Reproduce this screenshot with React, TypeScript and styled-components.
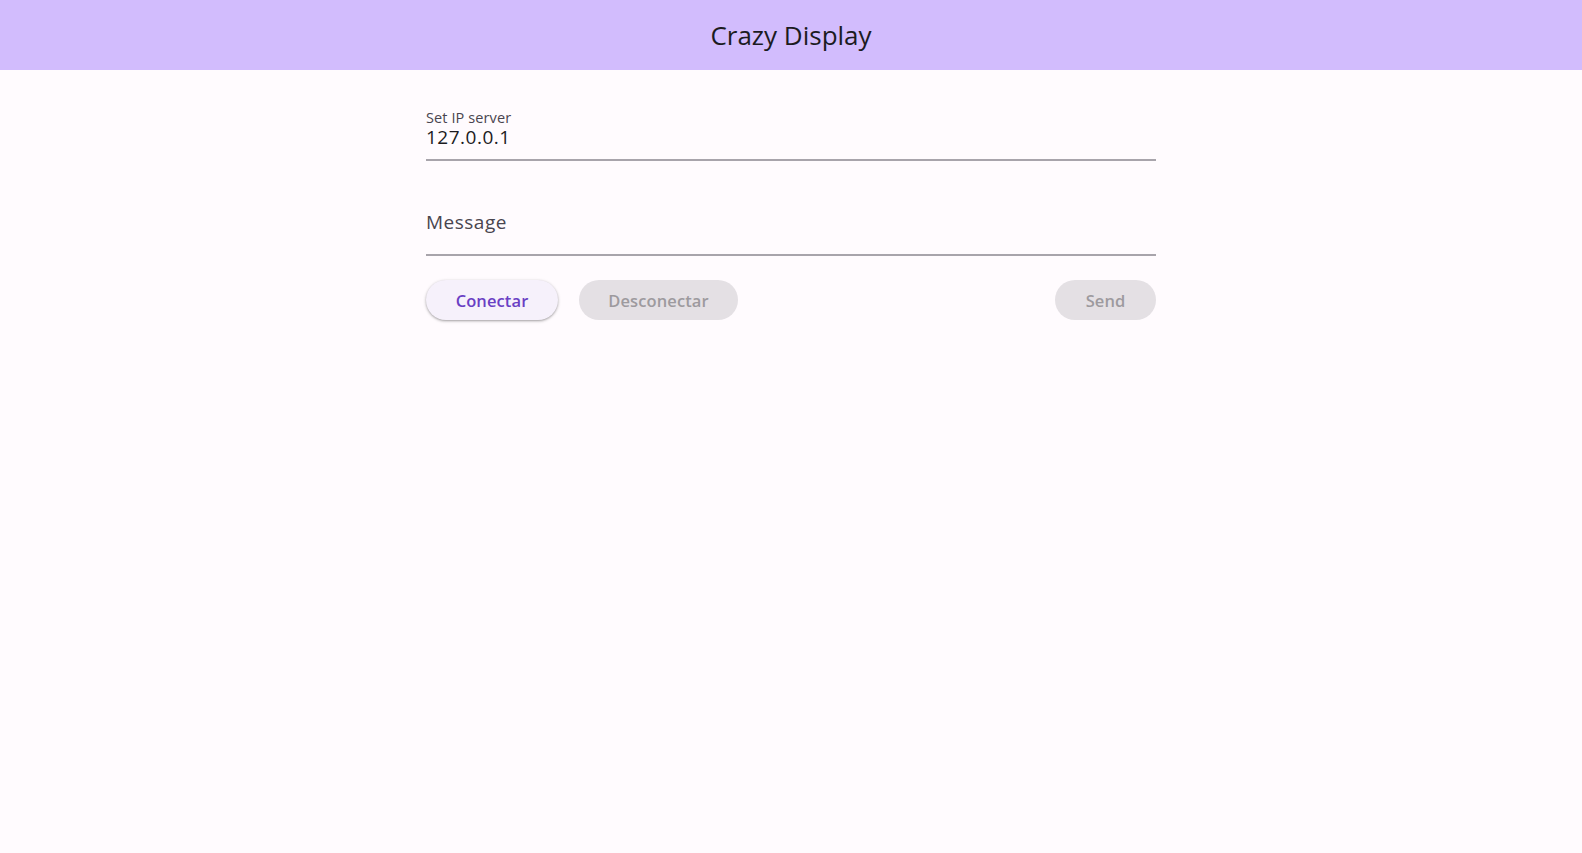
import React from "react";
import styled, { createGlobalStyle } from "styled-components";

const GlobalStyle = createGlobalStyle`
  html, body {
    margin: 0;
    padding: 0;
    background: #fffbfe;
    font-family: "Open Sans", "Noto Sans", sans-serif;
    color: #1c1b1f;
  }
  * { box-sizing: border-box; }
`;

const Page = styled.div`
  min-height: 853px;
  display: flex;
  flex-direction: column;
  background: #fffbfe;
`;

const AppBar = styled.header`
  height: 70px;
  background: #d2bcfd;
  display: flex;
  align-items: center;
  justify-content: center;
`;

const Title = styled.h1`
  margin: 0;
  font-size: 26px;
  font-weight: 400;
  color: #1c1b1f;
  line-height: 1;
`;

const Content = styled.main`
  width: 730px;
  margin: 0 auto;
  padding-top: 35px;
  display: flex;
  flex-direction: column;
`;

const Field = styled.label<{ $gapAfter: number; $shift: number }>`
  height: 56px;
  border-bottom: 2px solid #a8a4ab;
  display: flex;
  flex-direction: column;
  justify-content: center;
  padding-bottom: ${(p) => p.$shift}px;
  margin-bottom: ${(p) => p.$gapAfter}px;
`;

const FloatLabel = styled.span`
  font-size: 14.5px;
  line-height: 16px;
  color: #49454f;
  letter-spacing: 0.1px;
`;

const Value = styled.span`
  font-size: 19px;
  line-height: 22px;
  letter-spacing: 0.5px;
  color: #1c1b1f;
`;

const Placeholder = styled.span`
  font-size: 19px;
  line-height: 22px;
  letter-spacing: 0.5px;
  color: #49454f;
`;

const ButtonRow = styled.div`
  display: flex;
  justify-content: space-between;
  align-items: center;
`;

const Group = styled.div`
  display: flex;
  gap: 21px;
`;

const Button = styled.button<{ $enabled?: boolean; $minWidth?: number }>`
  height: 40px;
  min-width: ${(p) => p.$minWidth ?? 0}px;
  border: none;
  border-radius: 20px;
  padding: 0 29px;
  font-family: "Open Sans", "Noto Sans", sans-serif;
  font-size: 16.5px;
  font-weight: 600;
  letter-spacing: 0.1px;
  background: ${(p) => (p.$enabled ? "#f6f1fb" : "#e4e0e4")};
  color: ${(p) => (p.$enabled ? "#6a3fc4" : "#9d9a9e")};
  box-shadow: ${(p) =>
    p.$enabled
      ? "0 1px 2px rgba(0,0,0,0.25), 0 1px 3px 1px rgba(0,0,0,0.1)"
      : "none"};
  cursor: ${(p) => (p.$enabled ? "pointer" : "default")};
`;

export default function App() {
  return (
    <Page>
      <GlobalStyle />
      <AppBar>
        <Title>Crazy Display</Title>
      </AppBar>
      <Content>
        <Field $gapAfter={39} $shift={7}>
          <FloatLabel>Set IP server</FloatLabel>
          <Value>127.0.0.1</Value>
        </Field>
        <Field $gapAfter={24} $shift={10}>
          <Placeholder>Message</Placeholder>
        </Field>
        <ButtonRow>
          <Group>
            <Button $enabled $minWidth={132}>Conectar</Button>
            <Button disabled $minWidth={159}>Desconectar</Button>
          </Group>
          <Button disabled $minWidth={101}>Send</Button>
        </ButtonRow>
      </Content>
    </Page>
  );
}
